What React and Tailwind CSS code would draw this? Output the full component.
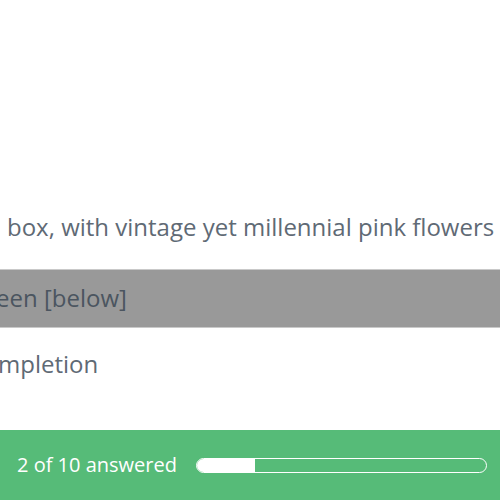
import React from 'react'

export default function App() {
  const answered = 2
  const total = 10

  return (
    <div
      className="flex h-[500px] w-[500px] flex-col overflow-hidden bg-white text-[24px] text-[#5f6a75]"
      style={{ fontFamily: '"Open Sans", "Noto Sans", sans-serif' }}
    >
      {/* question options, the page is scrolled sideways */}
      <div className="h-[207px]" />
      <div className="flex h-[40px] items-center whitespace-nowrap pl-[7px]">
        box, with vintage yet millennial pink flowers
      </div>
      <div className="mt-[22px] flex h-[59px] items-center overflow-hidden whitespace-nowrap border-y border-[#c9c9c9] bg-[#999999] text-[#4b5560]">
        <span className="-ml-[4px] -mt-[2px]">een [below]</span>
      </div>
      <div className="mt-[16px] flex h-[40px] items-center overflow-hidden whitespace-nowrap">
        <span className="-ml-[2px]">mpletion</span>
      </div>
      <div className="flex-1" />

      {/* progress footer */}
      <footer className="flex h-[70px] items-center gap-[19px] bg-[#56bb78] pl-[17px] pr-[13px] text-white">
        <span className="whitespace-nowrap text-[20px]">
          {answered} of {total} answered
        </span>
        <div className="h-[15px] flex-1 overflow-hidden rounded-full border-[1.5px] border-white">
          <div className="h-full bg-white" style={{ width: `${(answered / total) * 100}%` }} />
        </div>
      </footer>
    </div>
  )
}
